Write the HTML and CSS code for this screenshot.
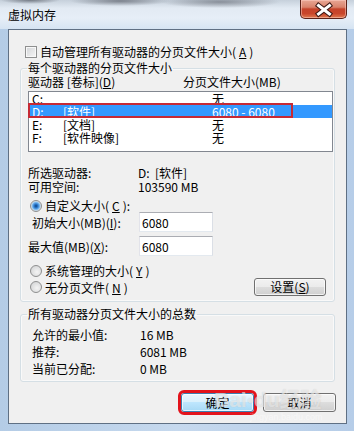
FILE: index.html
```html
<!DOCTYPE html>
<html lang="zh-CN">
<head>
    <meta charset="UTF-8">
    <title>虚拟内存</title>
    <link rel="stylesheet" href="styles.css">
</head>
<body>
    <div class="window">
        <!-- Title bar -->
        <div class="titlebar">
            <span class="title">虚拟内存</span>
            <button class="close">
                <svg width="47" height="19" viewBox="0 0 47 19">
                    <path d="M18.5 5.5 L29.5 14 M29.5 5.5 L18.5 14" stroke="#3a1612" stroke-width="5" stroke-linecap="square"/>
                    <path d="M18.5 5.5 L29.5 14 M29.5 5.5 L18.5 14" stroke="#ffffff" stroke-width="3" stroke-linecap="square"/>
                </svg>
            </button>
        </div>

        <!-- Dialog body -->
        <div class="client">
            <label class="check-row"><span class="checkbox"></span>自动管理所有驱动器的分页文件大小(<u>A</u>)</label>

            <fieldset class="group">
                <legend>每个驱动器的分页文件大小</legend>
                <div class="list-head">
                    <span class="head-drive">驱动器 [卷标](<u>D</u>)</span>
                    <span>分页文件大小(MB)</span>
                </div>
                <div class="listbox">
                    <div class="row"><span class="c-letter">C:</span><span class="c-label"></span><span>无</span></div>
                    <div class="row selected"><span class="c-letter">D:</span><span class="c-label">[软件]</span><span>6080 - 6080</span><span class="mark"></span></div>
                    <div class="row"><span class="c-letter">E:</span><span class="c-label">[文档]</span><span>无</span></div>
                    <div class="row"><span class="c-letter">F:</span><span class="c-label">[软件映像]</span><span>无</span></div>
                </div>

                <div class="info">
                    <div class="info-row"><span class="info-label">所选驱动器:</span><span>D:&nbsp;&nbsp;[软件]</span></div>
                    <div class="info-row"><span class="info-label">可用空间:</span><span>103590 MB</span></div>
                </div>

                <label class="radio-row first"><span class="radio on"></span>自定义大小(<u>C</u>):</label>
                <div class="field-row">
                    <span class="field-label indent">初始大小(MB)(<u>I</u>):</span>
                    <input class="textbox" value="6080">
                </div>
                <div class="field-row second">
                    <span class="field-label">最大值(MB)(<u>X</u>):</span>
                    <input class="textbox" value="6080">
                </div>
                <label class="radio-row sys"><span class="radio"></span>系统管理的大小(<u>Y</u>)</label>
                <div class="radio-line">
                    <label class="radio-row"><span class="radio"></span>无分页文件(<u>N</u>)</label>
                    <button class="btn set">设置(<u>S</u>)</button>
                </div>
            </fieldset>

            <fieldset class="group totals">
                <legend>所有驱动器分页文件大小的总数</legend>
                <div class="total-row"><span class="total-label">允许的最小值:</span><span>16 MB</span></div>
                <div class="total-row"><span class="total-label">推荐:</span><span>6081 MB</span></div>
                <div class="total-row"><span class="total-label">当前已分配:</span><span>0 MB</span></div>
            </fieldset>

            <div class="actions">
                <button class="btn default">确定</button>
                <button class="btn">取消</button>
            </div>
        </div>

        <!-- Watermark over the dialog -->
        <div class="watermark">
            <span class="wm-big">Bai<span class="wm-paw">&#9679;</span>du经验</span>
            <span class="wm-small">jingyan.baidu.com</span>
        </div>
    </div>
</body>
</html>
```

FILE: styles.css
```css
* {
    box-sizing: border-box;
}

body {
    margin: 0;
    font-family: "Noto Sans CJK SC", sans-serif;
    font-size: 12px;
    color: #000000;
    overflow: hidden;
}

u {
    text-decoration: underline;
}

.window {
    position: relative;
    display: flex;
    flex-direction: column;
    width: 354px;
    height: 431px;
    background: linear-gradient(to right, #b4cce6, #c6d9ee 50%, #b6cde8);
}

.titlebar {
    display: flex;
    align-items: flex-start;
    height: 29px;
    background:
        radial-gradient(ellipse 50px 5px at 120px 1px, rgba(60, 64, 74, 0.55), transparent),
        radial-gradient(ellipse 60px 6px at 220px 2px, rgba(70, 74, 84, 0.5), transparent),
        radial-gradient(ellipse 30px 4px at 30px 0px, rgba(60, 64, 74, 0.6), transparent),
        linear-gradient(to bottom, #c6d0db 0, #e2eaf3 8px, #e6eef7 18px, #d6e4f2 29px);
}

.title {
    padding: 8px 0 0 8px;
    line-height: 14px;
    font-size: 12px;
}

.close {
    position: relative;
    margin-left: auto;
    margin-right: 7px;
    width: 47px;
    height: 19px;
    padding: 0;
    border: 1px solid #5c2219;
    border-top: none;
    border-radius: 0 0 5px 5px;
    background: linear-gradient(to bottom, #e8a795 0%, #d9836c 40%, #c5432a 50%, #c9462b 75%, #e07a4f 100%);
    box-shadow: inset 0 0 0 1px rgba(255, 210, 200, 0.5);
}

.close svg {
    position: absolute;
    left: -1px;
    top: 0;
}

.client {
    flex: 1;
    margin: 0 7px 7px 8px;
    padding: 0 11px 10px;
    border: 1px solid #5f7084;
    background-color: #f0f0f0;
    display: flex;
    flex-direction: column;
}

.check-row {
    display: flex;
    align-items: center;
    gap: 3px;
    margin-top: 15px;
    padding-left: 5px;
    height: 14px;
    line-height: 14px;
}

.checkbox {
    width: 12px;
    height: 12px;
    border: 1px solid #8e8f8f;
    background: linear-gradient(135deg, #d2d4d7, #f6f6f6);
    box-shadow: inset 0 0 0 1px #f8f8f8;
}

.group {
    margin: 2px 0 0;
    padding: 0 7px 5px;
    border: 1px solid #d5dfe5;
    border-radius: 3px;
    box-shadow: inset 0 0 0 1px rgba(255, 255, 255, 0.6);
    min-width: 0;
}

.group legend {
    padding: 0 1px;
    margin-left: -1px;
    line-height: 14px;
}

.list-head {
    display: flex;
    line-height: 14px;
}

.head-drive {
    width: 155px;
}

.listbox {
    margin-top: 2px;
    margin-right: -6px;
    height: 61px;
    border: 1px solid #828790;
    background-color: #ffffff;
}

.row {
    position: relative;
    display: flex;
    height: 13px;
    line-height: 13px;
    padding-left: 3px;
}

.row.selected {
    background-color: #3399ff;
    color: #ffffff;
}

.c-letter {
    width: 31px;
}

.c-label {
    width: 149px;
}

.mark {
    position: absolute;
    left: -1px;
    top: -2px;
    width: 265px;
    height: 15px;
    border: 2px solid #c62a35;
}

.info {
    margin-top: 14px;
}

.info-row {
    display: flex;
    line-height: 14px;
}

.info-label {
    width: 110px;
}

.radio-row {
    display: flex;
    align-items: center;
    gap: 3px;
    padding-left: 2px;
    line-height: 13px;
}

.radio-row.first {
    margin-top: 5px;
}

.radio-row.sys {
    margin-top: 8px;
    line-height: 14px;
}

.radio {
    width: 12px;
    height: 12px;
    border-radius: 50%;
    border: 1px solid #8e8f8f;
    background: radial-gradient(circle at 60% 60%, #f4f4f4 0, #d9dadb 70%);
}

.radio.on {
    background: radial-gradient(circle, #0c3f7c 0, #2b7bd0 2px, #8fc6f2 4px, #e6e6e6 5px, #d5d6d7 6px);
}

.field-row {
    display: flex;
    align-items: center;
    height: 20px;
}

.field-row.second {
    margin-top: 4px;
}

.field-label {
    width: 111px;
}

.field-label.indent {
    padding-left: 4px;
}

.textbox {
    width: 74px;
    height: 20px;
    padding: 0 2px;
    border: 1px solid;
    border-color: #abadb3 #dbdfe6 #e3e9ef #e2e3ea;
    background-color: #ffffff;
    font: inherit;
    line-height: 18px;
    outline: none;
}

.radio-line {
    display: flex;
    align-items: center;
    justify-content: space-between;
    height: 18px;
}

.btn {
    width: 73px;
    height: 19px;
    padding: 0;
    border: 1px solid #707070;
    border-radius: 3px;
    background: linear-gradient(#f2f2f2 0%, #ebebeb 50%, #dddddd 50%, #cfcfcf 100%);
    box-shadow: inset 0 0 0 1px rgba(255, 255, 255, 0.7);
    font: inherit;
    color: #000000;
    line-height: 17px;
}

.btn.set {
    width: 72px;
    height: 18px;
    margin-right: 1px;
    line-height: 16px;
}

.totals {
    margin-top: 5px;
    padding-bottom: 4px;
}

.totals legend {
    line-height: 14px;
}

.total-row {
    display: flex;
    line-height: 17px;
    padding-left: 4px;
}

.total-row:first-of-type {
    margin-top: 5px;
}

.total-label {
    width: 108px;
}

.actions {
    display: flex;
    justify-content: flex-end;
    gap: 9px;
    margin-top: 11px;
    margin-right: -1px;
}

.btn.default {
    border-color: #3c7fb1;
    background: linear-gradient(#eaf6fd 0%, #d9f0fc 50%, #bee6fd 50%, #a7d9f5 100%);
    outline: 3px solid #e3131b;
    outline-offset: 0;
}

.watermark {
    position: absolute;
    left: 214px;
    top: 388px;
    display: flex;
    flex-direction: column;
    pointer-events: none;
}

.wm-big {
    font-family: "Liberation Sans", "Noto Sans CJK SC", sans-serif;
    font-size: 21px;
    font-weight: bold;
    line-height: 24px;
    color: rgba(255, 255, 255, 0.55);
    text-shadow: 0 0 1px rgba(120, 120, 120, 0.35);
}

.wm-paw {
    font-size: 12px;
    vertical-align: top;
}

.wm-small {
    font-family: "Liberation Sans", sans-serif;
    font-size: 9px;
    line-height: 10px;
    margin-left: 36px;
    color: rgba(255, 255, 255, 0.5);
}
```
